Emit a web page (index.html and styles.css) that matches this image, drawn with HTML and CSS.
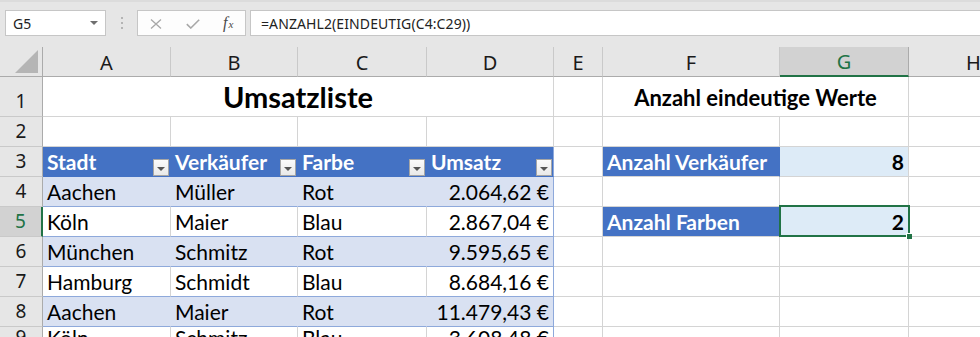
FILE: index.html
```html
<!DOCTYPE html>
<html lang="de">
<head>
<meta charset="utf-8">
<title>Umsatzliste</title>
<link rel="stylesheet" href="styles.css">
</head>
<body>
<div class="toolbar">
  <div class="namebox"><span>G5</span><svg class="caret" width="8" height="4" viewBox="0 0 8 4"><path d="M0 0H8L4 4Z" fill="#6f6f6f"/></svg></div>
  <div class="grip"><i></i><i></i><i></i></div>
  <div class="fbtns">
    <svg class="ico-x" width="12" height="10" viewBox="0 0 12 10"><path d="M1 0.5L11 9.5M11 0.5L1 9.5" stroke="#a8a8a8" stroke-width="1.3" fill="none"/></svg>
    <svg class="ico-ok" width="14" height="10" viewBox="0 0 14 10"><path d="M0.8 5.2L4.8 9L13.2 0.8" stroke="#a8a8a8" stroke-width="1.6" fill="none"/></svg>
    <span class="fx"><span class="fx-f">f</span><span class="fx-x">x</span></span>
  </div>
  <div class="formula">=ANZAHL2(EINDEUTIG(C4:C29))</div>
</div>

<div class="sheet">
  <!-- column headers -->
  <div class="corner"><svg width="24" height="23" viewBox="0 0 24 23"><path d="M23 0V23H0Z" fill="#b5b5b5"/></svg></div>
  <div class="ch">A</div>
  <div class="ch">B</div>
  <div class="ch">C</div>
  <div class="ch">D</div>
  <div class="ch">E</div>
  <div class="ch">F</div>
  <div class="ch ch-sel">G</div>
  <div class="ch">H</div>

  <!-- row 1 -->
  <div class="rh">1</div>
  <div class="c title span4">Umsatzliste</div>
  <div class="c"></div>
  <div class="c subtitle span2">Anzahl eindeutige Werte</div>
  <div class="c"></div>

  <!-- row 2 -->
  <div class="rh">2</div>
  <div class="c"></div><div class="c"></div><div class="c"></div><div class="c"></div>
  <div class="c"></div><div class="c"></div><div class="c"></div><div class="c"></div>

  <!-- row 3 -->
  <div class="rh">3</div>
  <div class="c th"><span class="lbl">Stadt</span><span class="filter"></span></div>
  <div class="c th"><span class="lbl">Verkäufer</span><span class="filter"></span></div>
  <div class="c th"><span class="lbl">Farbe</span><span class="filter"></span></div>
  <div class="c th last"><span class="lbl">Umsatz</span><span class="filter"></span></div>
  <div class="c"></div>
  <div class="c label">Anzahl Verkäufer</div>
  <div class="c result">8</div>
  <div class="c"></div>

  <!-- row 4 -->
  <div class="rh">4</div>
  <div class="c tr band">Aachen</div>
  <div class="c tr band">Müller</div>
  <div class="c tr band">Rot</div>
  <div class="c tr band last num">2.064,62 €</div>
  <div class="c"></div><div class="c"></div><div class="c"></div><div class="c"></div>

  <!-- row 5 -->
  <div class="rh rh-sel">5</div>
  <div class="c tr">Köln</div>
  <div class="c tr">Maier</div>
  <div class="c tr">Blau</div>
  <div class="c tr last num">2.867,04 €</div>
  <div class="c"></div>
  <div class="c label">Anzahl Farben</div>
  <div class="c result active">2</div>
  <div class="c"></div>

  <!-- row 6 -->
  <div class="rh">6</div>
  <div class="c tr band">München</div>
  <div class="c tr band">Schmitz</div>
  <div class="c tr band">Rot</div>
  <div class="c tr band last num">9.595,65 €</div>
  <div class="c"></div><div class="c"></div><div class="c"></div><div class="c"></div>

  <!-- row 7 -->
  <div class="rh">7</div>
  <div class="c tr">Hamburg</div>
  <div class="c tr">Schmidt</div>
  <div class="c tr">Blau</div>
  <div class="c tr last num">8.684,16 €</div>
  <div class="c"></div><div class="c"></div><div class="c"></div><div class="c"></div>

  <!-- row 8 -->
  <div class="rh">8</div>
  <div class="c tr band">Aachen</div>
  <div class="c tr band">Maier</div>
  <div class="c tr band">Rot</div>
  <div class="c tr band last num">11.479,43 €</div>
  <div class="c"></div><div class="c"></div><div class="c"></div><div class="c"></div>

  <!-- row 9 -->
  <div class="rh">9</div>
  <div class="c tr">Köln</div>
  <div class="c tr">Schmitz</div>
  <div class="c tr">Blau</div>
  <div class="c tr last num">3.608,48 €</div>
  <div class="c"></div><div class="c"></div><div class="c"></div><div class="c"></div>
</div>
</body>
</html>
```

FILE: styles.css
```css
html, body {
  margin: 0;
  padding: 0;
}
body {
  width: 980px;
  height: 337px;
  overflow: hidden;
  background: #ffffff;
  font-family: Lato, "Liberation Sans", sans-serif;
  color: #000;
}

/* ---------- formula bar ---------- */
.toolbar {
  height: 47px;
  box-sizing: border-box;
  background: #e6e6e6;
  border-top: 2px solid #dcdcdc;
  padding: 8px 0 0 5px;
  display: flex;
  align-items: flex-start;
  font-family: "Noto Sans", "Open Sans", sans-serif;
  font-size: 14px;
  color: #222;
}
.namebox {
  width: 101px;
  height: 26px;
  box-sizing: border-box;
  background: #fff;
  border: 1px solid #c6c6c6;
  display: flex;
  align-items: center;
  justify-content: space-between;
  padding: 0 7px 0 7px;
}
.grip {
  margin-left: 15px;
  width: 3px;
  height: 26px;
  display: flex;
  flex-direction: column;
  justify-content: center;
  gap: 3px;
}
.grip i {
  display: block;
  width: 2px;
  height: 2px;
  background: #b4b4b4;
}
.fbtns {
  margin-left: 13px;
  width: 109px;
  height: 26px;
  box-sizing: border-box;
  background: #fdfdfd;
  border: 1px solid #c6c6c6;
  display: flex;
  align-items: center;
  padding-left: 12px;
}
.ico-x { margin-top: 1px; }
.ico-ok { margin-left: 24px; margin-top: 2px; }
.fx {
  margin-left: 23px;
  font-family: "Liberation Serif", "DejaVu Serif", serif;
  font-style: italic;
  color: #4a4a4a;
  display: flex;
  align-items: baseline;
}
.fx-f { font-size: 16px; }
.fx-x { font-size: 11px; margin-left: 1px; }
.formula {
  margin-left: 4px;
  flex: 1;
  height: 26px;
  box-sizing: border-box;
  background: #fff;
  border: 1px solid #c6c6c6;
  border-right: none;
  display: flex;
  align-items: center;
  padding-left: 10px;
  letter-spacing: 0.1px;
}

/* ---------- sheet grid ---------- */
.sheet {
  display: grid;
  grid-template-columns: 43px 128px 127px 129px 127px 49px 177px 129px 130px;
  grid-template-rows: 30px 40px 30px 30px 30px 30px 30px 30px 30px;
}
.sheet > div {
  box-sizing: border-box;
  min-width: 0;
}
.corner, .ch, .rh {
  background: #e6e6e6;
  font-family: "Noto Sans", "Open Sans", sans-serif;
  color: #1a1a1a;
}
.corner {
  border-right: 1px solid #ababab;
  border-bottom: 1px solid #ababab;
  display: flex;
  align-items: flex-end;
  justify-content: flex-end;
  padding: 0 3px 3px 0;
}
.ch {
  border-right: 1px solid #c9c9c9;
  border-bottom: 1px solid #ababab;
  display: flex;
  align-items: center;
  justify-content: center;
  font-size: 20px;
  padding-top: 1px;
}
.ch-sel {
  background: #d2d2d2;
  color: #217346;
  border-bottom: 2px solid #217346;
  border-right-color: #ababab;
}
.rh {
  border-right: 1px solid #ababab;
  border-bottom: 1px solid #c9c9c9;
  display: flex;
  align-items: flex-end;
  justify-content: center;
  font-size: 19px;
  line-height: 1;
  padding-bottom: 5px;
}
.rh-sel {
  background: #d2d2d2;
  color: #217346;
  border-right: 2px solid #217346;
}

.c {
  border-right: 1px solid #d4d4d4;
  border-bottom: 1px solid #d4d4d4;
  display: flex;
  align-items: flex-end;
  padding: 0 4px 4px 4px;
  font-size: 21px;
  line-height: 1;
  white-space: nowrap;
  overflow: hidden;
}
.span4 { grid-column: span 4; }
.span2 { grid-column: span 2; }
.title {
  justify-content: center;
  font-weight: bold;
  font-size: 29px;
  padding-bottom: 5px;
}
.subtitle {
  justify-content: center;
  font-weight: bold;
  font-size: 22px;
  padding-bottom: 7px;
}

/* table */
.th {
  background: #4472c4;
  color: #fff;
  font-weight: bold;
  border-right-color: #4472c4;
  border-bottom-color: #4472c4;
  justify-content: space-between;
  padding: 0 1px 0 4px;
}
.th .lbl { margin-bottom: 4px; }
.filter {
  width: 16px;
  height: 17px;
  box-sizing: border-box;
  flex: none;
  background: linear-gradient(#fbfbfb, #e9e9e9);
  border: 1px solid #a6a6a6;
  display: flex;
  align-items: center;
  justify-content: center;
}
.filter::before {
  content: "";
  width: 0;
  height: 0;
  border-left: 4px solid transparent;
  border-right: 4px solid transparent;
  border-top: 4px solid #555;
  margin-top: 2px;
}
.tr {
  border-bottom-color: #8ea9db;
}
.band {
  background: #d9e1f2;
  border-right-color: #d9e1f2;
}
.last {
  border-right-color: #8ea9db;
}
.th.last { border-right-color: #8ea9db; }
.num { justify-content: flex-end; }

.label {
  background: #4472c4;
  color: #fff;
  font-weight: bold;
  border-right-color: #4472c4;
}
.result {
  background: #ddebf7;
  font-weight: bold;
  justify-content: flex-end;
}
.active {
  position: relative;
  overflow: visible;
}
.active::after {
  content: "";
  position: absolute;
  left: -1px;
  top: -2px;
  right: -2px;
  bottom: -1px;
  border: 2px solid #217346;
}
.active::before {
  content: "";
  position: absolute;
  right: -4px;
  bottom: -3px;
  width: 5px;
  height: 5px;
  background: #217346;
  border-left: 1px solid #fff;
  border-top: 1px solid #fff;
  z-index: 2;
}
```
